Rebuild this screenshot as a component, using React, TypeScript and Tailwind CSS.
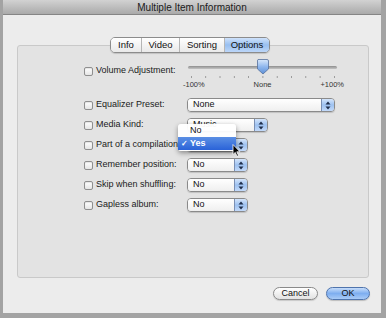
import React from "react";

const font = "font-['Liberation_Sans',Arial,sans-serif]";

function Checkbox() {
  return (
    <div className="w-[9px] h-[9px] shrink-0 rounded-[2px] border border-[#8f8f8f] bg-gradient-to-b from-white to-[#e6e6e6] shadow-[inset_0_1px_1px_rgba(0,0,0,0.1)]" />
  );
}

function Stepper() {
  return (
    <svg width="6" height="9" viewBox="0 0 6 9">
      <path d="M3 0.5 L5.5 3.5 H0.5 Z" fill="#1e2d4a" />
      <path d="M3 8.5 L5.5 5.5 H0.5 Z" fill="#1e2d4a" />
    </svg>
  );
}

function Select({ value, width }: { value: string; width: string }) {
  return (
    <div
      className={`${width} h-[14px] flex rounded-[4px] border border-[#8a8a8a] overflow-hidden shadow-[0_1px_1px_rgba(0,0,0,0.15)]`}
    >
      <div className="flex-1 flex items-center pl-[5px] bg-gradient-to-b from-white to-[#efefef] text-[9px] text-[#111]">
        {value}
      </div>
      <div className="w-[13px] flex items-center justify-center border-l border-[#7a8fb3] bg-gradient-to-b from-[#d4e5fb] via-[#9dc1f0] to-[#c3dafa]">
        <Stepper />
      </div>
    </div>
  );
}

function Slider() {
  const ticks = Array.from({ length: 11 }, (_, i) => 8 + i * 14.3);
  return (
    <div className="-ml-[4px] w-[161px] flex flex-col">
      <svg width="161" height="20" viewBox="0 0 161 20" className="overflow-visible">
        <defs>
          <linearGradient id="thumb" x1="0" y1="0" x2="0" y2="1">
            <stop offset="0" stopColor="#d9e8fb" />
            <stop offset="0.5" stopColor="#8fb7ee" />
            <stop offset="1" stopColor="#5d8fd6" />
          </linearGradient>
          <linearGradient id="track" x1="0" y1="0" x2="0" y2="1">
            <stop offset="0" stopColor="#8e8e8e" />
            <stop offset="1" stopColor="#c4c4c4" />
          </linearGradient>
        </defs>
        <rect x="5" y="5" width="149" height="3" rx="1.5" fill="url(#track)" />
        {ticks.map((x, i) => (
          <rect key={i} x={x} y="15" width="0.8" height="2" fill="#8a8a8a" />
        ))}
        <path
          d="M75 -1.5 H84 Q85.5 -1.5 85.5 0 V8 L80 13 L74.5 8 V0 Q74.5 -1.5 75 -1.5 Z"
          fill="url(#thumb)"
          stroke="#55709c"
          strokeWidth="0.8"
        />
      </svg>
      <div className="flex justify-between text-[7.5px] text-[#333] leading-none">
        <span>-100%</span>
        <span>None</span>
        <span>+100%</span>
      </div>
    </div>
  );
}

const rows = [
  { label: "Equalizer Preset:", value: "None", width: "w-[148px]" },
  { label: "Media Kind:", value: "Music", width: "w-[81px]" },
  { label: "Part of a compilation:", value: "Yes", width: "w-[61px]" },
  { label: "Remember position:", value: "No", width: "w-[61px]" },
  { label: "Skip when shuffling:", value: "No", width: "w-[61px]" },
  { label: "Gapless album:", value: "No", width: "w-[61px]" },
];

const tabs = ["Info", "Video", "Sorting", "Options"];

export default function App() {
  return (
    <div className={`w-[386px] h-[318px] bg-[#a3a3a3] ${font} overflow-hidden`}>
      <div className="ml-[3px] w-[378px] h-[313px] bg-[#ececec] flex flex-col">
        {/* Title bar */}
        <div className="h-[15px] shrink-0 flex items-center justify-center bg-gradient-to-b from-[#d2d2d2] to-[#aaaaaa] border-b border-[#858585] text-[10px] text-[#1a1a1a]">
          Multiple Item Information
        </div>

        {/* Tabs */}
        <div className="mt-[22px] h-[16px] flex justify-center relative z-10">
          <div className="flex h-[16px] rounded-[5px] border border-[#8c8c8c] overflow-hidden shadow-[0_1px_1px_rgba(0,0,0,0.15)] ml-[-4px]">
            {tabs.map((t, i) => (
              <div
                key={t}
                className={`flex items-center justify-center text-[9.5px] text-[#111] ${
                  i > 0 ? "border-l border-[#b5b5b5]" : ""
                } ${
                  t === "Options"
                    ? "w-[45px] bg-gradient-to-b from-[#cfe2fb] via-[#98bff0] to-[#bcd6f8]"
                    : "bg-gradient-to-b from-white to-[#e9e9e9]"
                } ${t === "Info" ? "w-[30px]" : t === "Video" ? "w-[38px]" : t === "Sorting" ? "w-[45px]" : ""}`}
              >
                {t}
              </div>
            ))}
          </div>
        </div>

        {/* Group box */}
        <div className="relative ml-[14px] w-[352px] h-[233px] -mt-[8px] bg-[#e3e3e3] border border-[#c9c9c9] rounded-[3px] pt-[15px] pl-[66px] text-[9px] text-[#1a1a1a]">
          <div className="flex h-[34px]">
            <div className="w-[103px] h-[20px] flex items-center gap-[3px]">
              <Checkbox />
              <span>Volume Adjustment:</span>
            </div>
            <Slider />
          </div>
          {rows.map((r) => (
            <div key={r.label} className="flex items-center h-[20px]">
              <div className="w-[103px] flex items-center gap-[3px] whitespace-nowrap">
                <Checkbox />
                <span>{r.label}</span>
              </div>
              <Select value={r.value} width={r.width} />
            </div>
          ))}

          {/* Popup menu */}
          <div className="absolute left-[160px] top-[78px] w-[58px] h-[27px] bg-white/95 rounded-[3px] shadow-[0_2px_5px_rgba(0,0,0,0.4)] flex flex-col pt-[1px] text-[9px] z-20">
            <div className="h-[12px] flex items-center pl-[12px] text-[#111]">No</div>
            <div className="h-[13px] flex items-center bg-gradient-to-b from-[#5b8fe4] to-[#2a62d8] text-white font-bold">
              <span className="w-[12px] text-center text-[8px]">✓</span>
              <span>Yes</span>
            </div>
          </div>

          {/* Cursor */}
          <svg className="absolute left-[214px] top-[98px] z-30" width="9" height="13" viewBox="0 0 9 13">
            <path d="M1 0.5 V10.5 L3.3 8.4 L5 12.3 L6.5 11.6 L4.8 7.8 H8 Z" fill="#000" stroke="#fff" strokeWidth="0.8" />
          </svg>
        </div>

        {/* Buttons */}
        <div className="mt-[9px] flex justify-end gap-[8px] pr-[11px] text-[9px]">
          <div className="w-[45px] h-[13px] rounded-full border border-[#8a8a8a] bg-gradient-to-b from-white to-[#e2e2e2] flex items-center justify-center text-[#111] shadow-[0_1px_1px_rgba(0,0,0,0.15)]">
            Cancel
          </div>
          <div className="w-[44px] h-[13px] rounded-full border border-[#4f74ad] bg-gradient-to-b from-[#c6dcf9] via-[#7eaef0] to-[#a9cbf7] flex items-center justify-center text-[#111] shadow-[0_1px_1px_rgba(0,0,0,0.2)]">
            OK
          </div>
        </div>
      </div>
    </div>
  );
}
